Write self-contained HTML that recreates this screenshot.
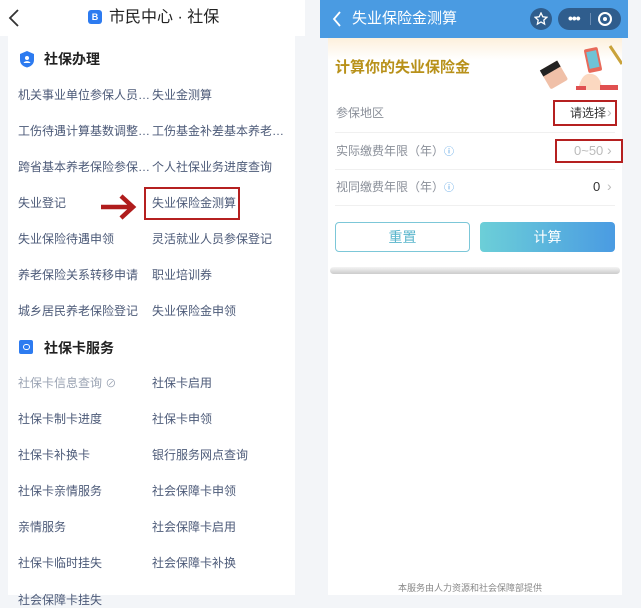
<!DOCTYPE html>
<html><head><meta charset="utf-8"><style>
*{margin:0;padding:0;box-sizing:border-box}
body{width:641px;height:595px;overflow:hidden;background:#f3f5f8;font-family:"Liberation Sans","Noto Sans CJK SC",sans-serif;position:relative}
.a{position:absolute;white-space:nowrap}
.it{font-size:12px;color:#4c5a78;line-height:16px}
</style></head><body>
<!-- left -->
<div class="a" style="left:0;top:0;width:305px;height:36px;background:#fff"></div>
<svg class="a" style="left:8px;top:9px" width="12" height="18"><path d="M10 1L2 9l8 8" fill="none" stroke="#333" stroke-width="1.8"/></svg>
<div class="a" style="left:88px;top:10px;width:14px;height:14px;background:#2d7bf0;border-radius:3px;color:#fff;font-size:9px;line-height:14px;text-align:center;font-weight:bold">B</div>
<div class="a" style="left:109px;top:7px;font-size:16px;color:#222;line-height:22px">市民中心 · 社保</div>
<div class="a" style="left:8px;top:36px;width:287px;height:559px;background:#fff"></div>
<svg class="a" style="left:19px;top:50px" width="16" height="18"><path d="M8 1L15 4v6c0 4-3 6.5-7 7.5C4 16.5 1 14 1 10V4z" fill="#2d7bf0"/><circle cx="8" cy="8" r="2" fill="#fff"/><path d="M4.5 13c1-2.5 6-2.5 7 0z" fill="#fff"/></svg>
<div class="a" style="left:44px;top:50px;font-size:14px;font-weight:bold;color:#222;line-height:18px">社保办理</div>
<div class="a it" style="left:18px;top:87px">机关事业单位参保人员…</div><div class="a it" style="left:152px;top:87px">失业金测算</div>
<div class="a it" style="left:18px;top:123px">工伤待遇计算基数调整…</div><div class="a it" style="left:152px;top:123px">工伤基金补差基本养老…</div>
<div class="a it" style="left:18px;top:159px">跨省基本养老保险参保…</div><div class="a it" style="left:152px;top:159px">个人社保业务进度查询</div>
<div class="a it" style="left:18px;top:195px">失业登记</div><div class="a it" style="left:152px;top:195px">失业保险金测算</div>
<div class="a it" style="left:18px;top:231px">失业保险待遇申领</div><div class="a it" style="left:152px;top:231px">灵活就业人员参保登记</div>
<div class="a it" style="left:18px;top:267px">养老保险关系转移申请</div><div class="a it" style="left:152px;top:267px">职业培训券</div>
<div class="a it" style="left:18px;top:303px">城乡居民养老保险登记</div><div class="a it" style="left:152px;top:303px">失业保险金申领</div>
<div class="a" style="left:144px;top:187px;width:96px;height:33px;border:2.5px solid #b52020"></div>
<svg class="a" style="left:99px;top:193px" width="40" height="28"><path d="M2 14H34M22 3l12 11-12 11" fill="none" stroke="#b01c1c" stroke-width="4.5"/></svg>
<div class="a" style="left:19px;top:340px;width:14px;height:14px;background:#2d7bf0;border-radius:2px"></div>
<div class="a" style="left:23px;top:344px;width:7px;height:6px;border:1.5px solid #fff;border-radius:3px"></div>
<div class="a" style="left:44px;top:339px;font-size:14px;font-weight:bold;color:#222;line-height:18px">社保卡服务</div>
<div class="a it" style="left:18px;top:375px;color:#9aa3b3">社保卡信息查询 <span style="font-size:11px">⊘</span></div><div class="a it" style="left:152px;top:375px">社保卡启用</div>
<div class="a it" style="left:18px;top:411px">社保卡制卡进度</div><div class="a it" style="left:152px;top:411px">社保卡申领</div>
<div class="a it" style="left:18px;top:447px">社保卡补换卡</div><div class="a it" style="left:152px;top:447px">银行服务网点查询</div>
<div class="a it" style="left:18px;top:483px">社保卡亲情服务</div><div class="a it" style="left:152px;top:483px">社会保障卡申领</div>
<div class="a it" style="left:18px;top:519px">亲情服务</div><div class="a it" style="left:152px;top:519px">社会保障卡启用</div>
<div class="a it" style="left:18px;top:555px">社保卡临时挂失</div><div class="a it" style="left:152px;top:555px">社会保障卡补换</div>
<div class="a it" style="left:18px;top:592px">社会保障卡挂失</div>
<!-- right -->
<div class="a" style="left:320px;top:0;width:308px;height:38px;background:#4a9be2"></div>
<svg class="a" style="left:332px;top:11px" width="10" height="16"><path d="M8 1L2 8l6 7" fill="none" stroke="#fff" stroke-width="1.8"/></svg>
<div class="a" style="left:352px;top:9px;font-size:15px;color:#fff;line-height:20px">失业保险金测算</div>
<div class="a" style="left:530px;top:8px;width:22px;height:22px;border-radius:11px;background:#2f5d8d"></div>
<svg class="a" style="left:534px;top:12px" width="14" height="14"><path d="M7 1l1.8 3.8 4 .5-3 2.8.8 4L7 10l-3.6 2.1.8-4-3-2.8 4-.5z" fill="none" stroke="#fff" stroke-width="1.3"/></svg>
<div class="a" style="left:558px;top:8px;width:63px;height:22px;border-radius:11px;background:#2f5d8d"></div>
<div class="a" style="left:568px;top:9px;color:#fff;font-size:14px;font-weight:bold;line-height:18px;letter-spacing:-1px">•••</div>
<div class="a" style="left:590px;top:13px;width:1px;height:12px;background:#6a8cb3"></div>
<div class="a" style="left:598px;top:12px;width:14px;height:14px;border:2px solid #fff;border-radius:7px"></div>
<div class="a" style="left:603px;top:17px;width:4px;height:4px;background:#fff;border-radius:2px"></div>
<div class="a" style="left:328px;top:38px;width:294px;height:252px;background:linear-gradient(#fdf0dc,#fff 22px)"></div>
<div class="a" style="left:328px;top:290px;width:294px;height:305px;background:#fff"></div>
<div class="a" style="left:335px;top:58px;font-size:15px;font-weight:bold;color:#b8911a;line-height:20px">计算你的失业保险金</div>
<svg class="a" style="left:538px;top:44px" width="84" height="46"><rect x="6" y="20" width="20" height="22" rx="2" transform="rotate(-30 16 31)" fill="#f0c0a8"/><rect x="6" y="20" width="20" height="7" transform="rotate(-30 16 31)" fill="#222"/><rect x="48" y="4" width="14" height="24" rx="2" transform="rotate(-12 55 16)" fill="#e86a5a"/><rect x="50" y="7" width="10" height="17" transform="rotate(-12 55 16)" fill="#6fc3d6"/><path d="M40 46c2-10 6-18 14-16 6 1 10 8 10 16z" fill="#fbd8c0"/><path d="M38 46h10v-4h-10zM62 46h18v-5h-18z" fill="#e05050"/><path d="M72 2l12 18" stroke="#c9a23a" stroke-width="3"/></svg>
<div class="a" style="left:336px;top:105px;font-size:12px;color:#8a8f99;line-height:16px">参保地区</div>
<div class="a" style="left:570px;top:105px;font-size:12px;color:#333;line-height:16px">请选择</div>
<div class="a" style="left:336px;top:143px;font-size:12px;color:#8a8f99;line-height:16px">实际缴费年限（年）<span style="color:#4a9be2;font-size:10px">ⓘ</span></div>
<div class="a" style="left:574px;top:143px;font-size:13px;color:#bbb;line-height:16px">0~50</div>
<div class="a" style="left:336px;top:179px;font-size:12px;color:#8a8f99;line-height:16px">视同缴费年限（年）<span style="color:#4a9be2;font-size:10px">ⓘ</span></div>
<div class="a" style="left:593px;top:179px;font-size:13px;color:#333;line-height:16px">0</div>
<div class="a" style="left:607px;top:104px;font-size:14px;color:#bbb">›</div>
<div class="a" style="left:607px;top:142px;font-size:14px;color:#bbb">›</div>
<div class="a" style="left:607px;top:178px;font-size:14px;color:#bbb">›</div>
<div class="a" style="left:335px;top:132px;width:280px;height:1px;background:#f0f0f0"></div>
<div class="a" style="left:335px;top:169px;width:280px;height:1px;background:#f0f0f0"></div>
<div class="a" style="left:335px;top:205px;width:280px;height:1px;background:#f0f0f0"></div>
<div class="a" style="left:553px;top:100px;width:64px;height:26px;border:2px solid #b52020"></div>
<div class="a" style="left:555px;top:139px;width:68px;height:24px;border:2px solid #b52020"></div>
<div class="a" style="left:335px;top:222px;width:135px;height:30px;border:1px solid #7cc7d8;border-radius:4px;text-align:center;font-size:14px;color:#5ab6cc;line-height:28px">重置</div>
<div class="a" style="left:480px;top:222px;width:135px;height:30px;border-radius:4px;background:linear-gradient(90deg,#6ccfd8,#4a9be2);text-align:center;font-size:14px;color:#fff;line-height:30px">计算</div>
<div class="a" style="left:330px;top:267px;width:290px;height:7px;border-radius:4px;background:linear-gradient(#f4f4f4,#ccc)"></div>
<div class="a" style="left:398px;top:582px;font-size:9px;color:#888;line-height:12px">本服务由人力资源和社会保障部提供</div>
</body></html>
